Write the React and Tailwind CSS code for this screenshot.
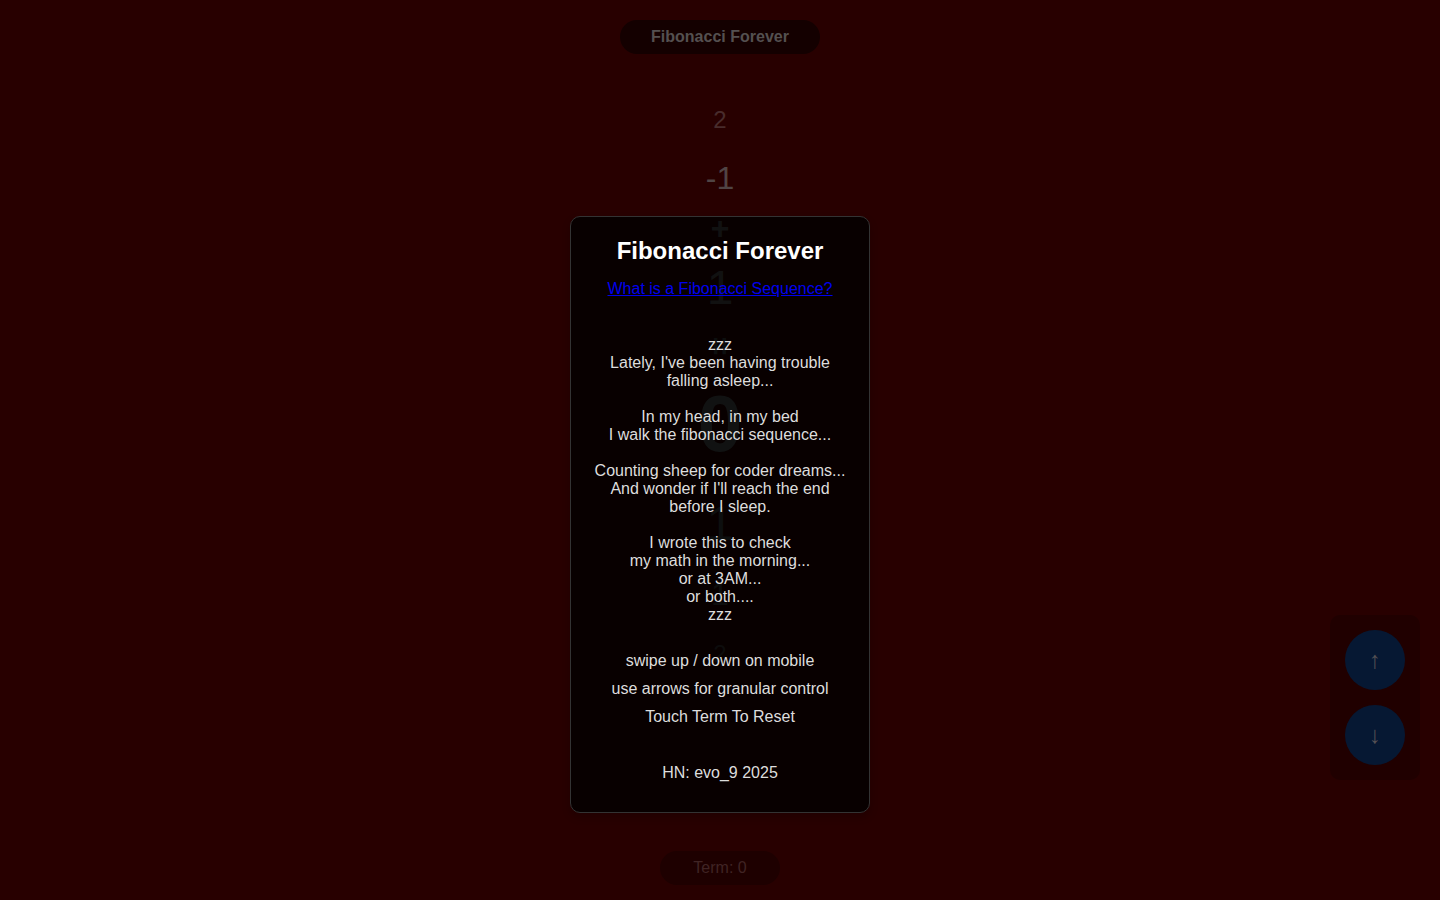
const poem = [
    ['zzz', "Lately, I've been having trouble", 'falling asleep...'],
    ['In my head, in my bed', 'I walk the fibonacci sequence...'],
    ['Counting sheep for coder dreams...', "And wonder if I'll reach the end", 'before I sleep.'],
    ['I wrote this to check', 'my math in the morning...', 'or at 3AM...', 'or both....', 'zzz'],
];

const hints = ['swipe up / down on mobile', 'use arrows for granular control', 'Touch Term To Reset'];

function Sequence() {
    return (
        <div className="flex flex-col items-center">
            <span className="text-2xl leading-7 text-[#482c2c]">2</span>
            <span className="mt-[26px] text-[32px] leading-9 text-[#504444]">-1</span>
            <span className="mt-3.5 text-[32px] font-bold leading-9 text-[#585858]">+</span>
            <span className="mt-3.5 text-5xl leading-14 text-[#545858]">1</span>
            <span className="mt-3 rotate-90 text-[32px] font-bold leading-9 text-[#404c4c]">=</span>
            <span className="mt-3.5 text-[80px] font-bold leading-[92px] text-[#545c5c]">0</span>
            <span className="mt-[26px] text-5xl leading-14 text-[#444c4c]">1</span>
            <span className="mt-6 text-[32px] leading-9 text-[#444848]">1</span>
            <span className="mt-7 text-2xl leading-7 text-[#403c3c]">2</span>
        </div>
    );
}

function InfoDialog() {
    return (
        <div
            role="dialog"
            aria-labelledby="info-title"
            className="w-[300px] rounded-[10px] border border-[#333] bg-black/80 p-5 text-center text-[#ddd] shadow-[0_4px_8px_rgba(0,0,0,0.2)]"
        >
            <h2 id="info-title" className="text-2xl font-bold leading-7 text-white">Fibonacci Forever</h2>
            <a href="#sequence" className="mt-[15px] block leading-[18px] text-[#0000ee] underline">
                What is a Fibonacci Sequence?
            </a>

            <div className="mt-[38px] space-y-[18px]">
                {poem.map((lines, i) => (
                    <p key={i} className="leading-[18px]">
                        {lines.map((line) => (
                            <span key={line} className="block whitespace-nowrap">{line}</span>
                        ))}
                    </p>
                ))}
            </div>

            <div className="mt-7 space-y-2.5">
                {hints.map((hint) => (
                    <p key={hint} className="leading-[18px]">{hint}</p>
                ))}
            </div>

            <p className="mb-2.5 mt-[38px] leading-[18px]">HN: evo_9 2025</p>
        </div>
    );
}

export default function App() {
    return (
        <div className="relative flex min-h-screen flex-col items-center justify-between bg-[#280000] pb-[15px] pt-5 font-['Liberation_Sans',Arial,sans-serif] text-base">
            <div className="flex flex-col items-center gap-[52px]">
                <h1 className="rounded-full bg-[#140000] px-[31px] py-2 font-bold leading-[18px] text-[#545050]">
                    Fibonacci Forever
                </h1>
                <Sequence />
            </div>

            <button type="button" className="w-[120px] rounded-full bg-[#1e0000] py-2 leading-[18px] text-[#402424]">
                Term: 0
            </button>

            {/* Step controls */}
            <div className="absolute bottom-[120px] right-5 flex flex-col gap-[15px] rounded-[10px] bg-[#200000] p-[15px]">
                <button type="button" aria-label="Next term" className="h-15 w-15 rounded-full bg-[#061833] text-2xl text-[#545054]">
                    ↑
                </button>
                <button type="button" aria-label="Previous term" className="h-15 w-15 rounded-full bg-[#061833] text-2xl text-[#545054]">
                    ↓
                </button>
            </div>

            <div className="absolute inset-x-0 top-[216px] flex justify-center">
                <InfoDialog />
            </div>
        </div>
    );
}
